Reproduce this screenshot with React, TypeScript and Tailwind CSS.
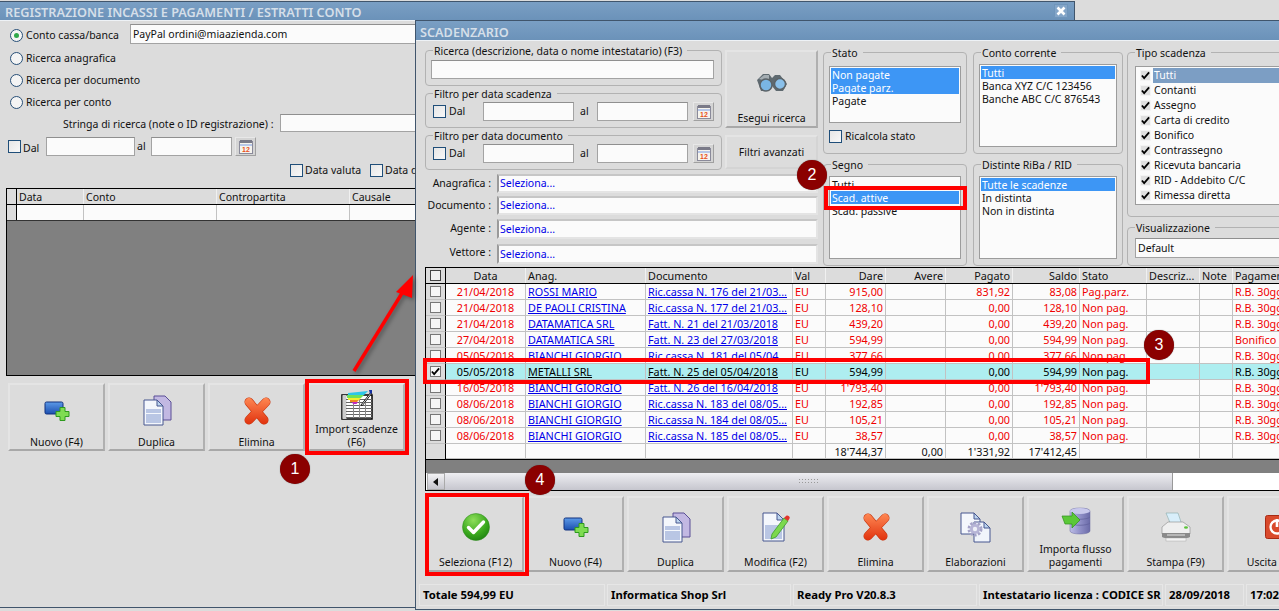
import React from "react";

const IconNew = () => (
  <svg width="26" height="20" viewBox="0 0 26 20">
    <defs><linearGradient id="nb" x1="0" y1="0" x2="0" y2="1"><stop offset="0" stopColor="#5c9ae8" /><stop offset="1" stopColor="#1c4fb0" /></linearGradient></defs>
    <rect x="1" y="1" width="18" height="12" rx="1.500" fill="url(#nb)" stroke="#10317e" />
    <path d="M16 6.500h5v4h4v5h-4v4h-5v-4h-4v-5h4z" fill="#7fdc52" stroke="#2e9a1e" />
  </svg>
);
const IconDup = () => (
  <svg width="30" height="31" viewBox="0 0 30 31">
    <path d="M12 1h11l6 6v18H12z" fill="#c2b8e2" stroke="#5a4f96" />
    <path d="M2 5h13l6 6v19H2z" fill="#f4f7fc" stroke="#46578f" />
    <path d="M15 5v6h6z" fill="#bcd4ee" stroke="#46578f" />
    <rect x="4" y="14" width="15" height="14" fill="#b9c6e4" />
    <rect x="4" y="18" width="15" height="1" fill="#f4f7fc" />
  </svg>
);
const IconDel = () => (
  <svg width="30" height="28" viewBox="0 0 30 28">
    <defs><linearGradient id="xr" gradientUnits="userSpaceOnUse" x1="0" y1="0" x2="0" y2="28"><stop offset="0" stopColor="#ff8a55" /><stop offset="1" stopColor="#e0300c" /></linearGradient></defs>
    <path d="M7 5L22 23M24 5L7 23" fill="none" stroke="#c8360f" strokeWidth="9" strokeLinecap="round" />
    <path d="M7 5L22 23M24 5L7 23" fill="none" stroke="url(#xr)" strokeWidth="7.800" strokeLinecap="round" />
  </svg>
);
const IconImport = () => (
  <svg width="32" height="31" viewBox="0 0 32 31">
    <rect x="1" y="6" width="30" height="24" fill="#fff" stroke="#000" strokeWidth="1.500" />
    <rect x="1.500" y="6" width="4" height="24" fill="#ccc" />
    {[10, 13, 16, 19, 22, 25, 28].map((y) => <rect key={y} x="5" y={y} width="26" height="1" fill="#666" />)}
    {[12, 18, 24].map((x) => <rect key={x} x={x} y="10" width="1" height="19" fill="#888" />)}
    <path d="M7 4L27 2l-4 4H7z" fill="#2cc6e8" />
    <path d="M6 6h17l-3 3H6z" fill="#6fe05a" />
    <path d="M7 9h13l-2 2H7z" fill="#f4ee2a" />
    <path d="M9 11h9l-2 2H9z" fill="#f08a20" />
    <path d="M11 13h6l-1.500 2H12z" fill="#c22ac0" />
    <path d="M20 16L30 3l1 1-10 13z" fill="#fff" stroke="#222" strokeWidth="1" />
    <path d="M28 1l3 0 0 3-2 1z" fill="#1530a0" />
  </svg>
);
const IconOk = () => (
  <svg width="28" height="28" viewBox="0 0 28 28">
    <defs><radialGradient id="gc" cx=".4" cy=".25" r=".85"><stop offset="0" stopColor="#8ede5a" /><stop offset=".6" stopColor="#3aa81e" /><stop offset="1" stopColor="#1a7a10" /></radialGradient></defs>
    <circle cx="14" cy="14" r="13.500" fill="url(#gc)" stroke="#2b8a18" strokeWidth=".5" />
    <path d="M6.500 14.500l5 5 10-10.500" fill="none" stroke="#fff" strokeWidth="3.400" strokeLinejoin="round" strokeLinecap="round" />
  </svg>
);
const IconEdit = () => (
  <svg width="28" height="30" viewBox="0 0 28 30">
    <path d="M1 1h14l7 7v21H1z" fill="#f4f7fc" stroke="#46578f" />
    <path d="M15 1v7h7z" fill="#bcd4ee" stroke="#46578f" />
    <rect x="3" y="13" width="17" height="14" fill="#b9c6e4" />
    <path d="M10 22L22 6l4 3-12 16-5 2z" fill="#7cd84e" stroke="#3c9a2a" strokeWidth=".8" />
    <path d="M22 6l2-2c1-.8 2-.6 3 .3 1 1 1 2 .2 2.700L26 9z" fill="#e2342a" />
  </svg>
);
const IconGearDocs = () => (
  <svg width="31" height="31" viewBox="0 0 31 31">
    <path d="M1 1h13l6 6v15H1z" fill="#f4f7fc" stroke="#46578f" />
    <path d="M14 1v6h6z" fill="#bcd4ee" stroke="#46578f" />
    <path d="M14 10h10l6 6v14H14z" fill="#f0f4fb" stroke="#46578f" />
    <path d="M24 10v6h6z" fill="#bcd4ee" stroke="#46578f" />
    <circle cx="15" cy="17" r="6" fill="none" stroke="#a5a3c8" strokeWidth="3" strokeDasharray="2.400 1.400" />
    <circle cx="15" cy="17" r="5" fill="#b6b4d6" />
    <circle cx="15" cy="17" r="2.200" fill="#eef0f8" />
  </svg>
);
const IconDb = () => (
  <svg width="30" height="28" viewBox="0 0 30 28">
    <defs><linearGradient id="db" x1="0" y1="0" x2="1" y2="0"><stop offset="0" stopColor="#bcbce6" /><stop offset=".5" stopColor="#9090c8" /><stop offset="1" stopColor="#6a6aa8" /></linearGradient></defs>
    <path d="M9 4c0-4 20-4 20 0v20c0 4-20 4-20 0z" fill="url(#db)" stroke="#6a6aa0" strokeWidth=".5" />
    <ellipse cx="19" cy="4" rx="10" ry="3" fill="#c8c8ec" />
    <path d="M9 10c3 3 17 3 20 0M9 16c3 3 17 3 20 0" fill="none" stroke="#5f5f9a" strokeWidth=".7" />
    <path d="M1 9h10V5l8 8-8 8v-4H4z" fill="#5bc838" stroke="#2f8f1c" strokeWidth=".7" />
  </svg>
);
const IconPrint = () => (
  <svg width="30" height="30" viewBox="0 0 30 30">
    <path d="M5 1h12l4 12H10z" fill="#d8eefa" stroke="#8aa" strokeWidth=".6" />
    <path d="M1 15l6-5h15l7 5v7H1z" fill="#efefef" stroke="#888" strokeWidth=".6" />
    <path d="M1 21h28v4c-2 2-26 2-28 0z" fill="#8a8a8a" />
    <rect x="6" y="22.500" width="18" height="1" fill="#e4e4e4" />
    <rect x="5" y="26" width="20" height="3" fill="#f4f4f4" stroke="#999" strokeWidth=".4" />
    <ellipse cx="25" cy="15.500" rx="2" ry="1.200" fill="#5cc23a" />
  </svg>
);
const IconExit = () => (
  <svg width="22" height="24" viewBox="0 0 22 24">
    <rect x="0.500" y="0.500" width="21" height="23" rx="2" fill="#d94a2c" stroke="#a82a14" />
    <circle cx="12" cy="12" r="6.500" fill="none" stroke="#fff" strokeWidth="2.300" />
    <rect x="10.700" y="4" width="2.600" height="8" fill="#fff" />
  </svg>
);
const IconBino = () => (
  <svg width="32" height="20" viewBox="0 0 32 20">
    <path d="M1 8l6-6h6l3 4 3-3h5l7 9-4 7H20l-4-5-3 5H5z" fill="#5f6a70" />
    <path d="M3 7l5-4h5v5H7z" fill="#a4adb2" />
    <circle cx="10" cy="13" r="6" fill="#7ab6e4" stroke="#5b6368" strokeWidth="1.500" />
    <circle cx="24" cy="12" r="5.500" fill="#8ac0ea" stroke="#5b6368" strokeWidth="1.500" />
  </svg>
);
const IconCal = () => (
  <svg width="14" height="14" viewBox="0 0 14 14">
    <rect x="0.500" y="1.500" width="13" height="12" fill="#f6f4ee" stroke="#8a8a9a" />
    <rect x="1" y="0" width="12" height="3" fill="#7a7a88" />
    <rect x="1" y="4" width="12" height="2" fill="#b8c8e8" />
    <text x="7" y="12" textAnchor="middle" fontSize="7" fontWeight="700" fill="#e8501a" fontFamily="Liberation Sans, sans-serif">12</text>
  </svg>
);

const Check = ({ on }: { on?: boolean }) => (
  <span className="shrink-0 w-[13px] h-[13px] border border-[#1f4e79] bg-gradient-to-br from-[#e6e6e6] to-[#f8f8f8] flex items-center justify-center">
    {on && <Tick />}
  </span>
);
const Tick = () => (
  <svg width="10" height="9" viewBox="0 0 10 9"><path d="M1 4.500l2.500 3L9 1" fill="none" stroke="#000" strokeWidth="2" /></svg>
);
const Radio = ({ on }: { on?: boolean }) => (
  <span className="shrink-0 w-[13px] h-[13px] rounded-full border border-[#274f77] bg-[#f4f4f4] flex items-center justify-center">
    {on && <span className="w-[5px] h-[5px] rounded-full bg-[#2fa84a]" />}
  </span>
);
const Field = ({ className = "", children }: { className?: string; children?: React.ReactNode }) => (
  <div className={"bg-[#fbfbfb] border border-[#a3a3a3] border-t-[#8f8f8f] flex items-center px-[2px] overflow-hidden whitespace-nowrap " + className}>{children}</div>
);
const CalBtn = ({ className = "" }: { className?: string }) => (
  <div className={"w-[21px] h-[19px] shrink-0 bg-[#d4d4d4] border border-[#e8e8e8] border-r-[#a0a0a0] border-b-[#a0a0a0] flex items-center justify-center " + className}><IconCal /></div>
);
const Group = ({ title, className = "", children }: { title: string; className?: string; children?: React.ReactNode }) => (
  <div className={"relative border border-[#b2b2b2] rounded-[4px] " + className}>
    <span className="absolute -top-[7px] left-[7px] bg-[#dcdcdc] px-[1px] pr-[5px] leading-[14px] whitespace-nowrap">{title}</span>
    {children}
  </div>
);
const Btn = ({ label, icon, className = "pb-[1px]" }: { label: React.ReactNode; icon: React.ReactNode; className?: string }) => (
  <div className={"shrink-0 w-[97px] bg-[#dcdcdc] border-2 border-t-[#e4e4e4] border-l-[#e4e4e4] border-r-[#b0b0b0] border-b-[#a8a8a8] flex flex-col items-center text-center " + className}>
    <div className="flex-1 flex items-center justify-center">{icon}</div>
    <div className="leading-[13px]">{label}</div>
  </div>
);
const ListItem = ({ on, children }: { on?: boolean; children: React.ReactNode }) => (
  <div className={"h-[13px] leading-[15px] px-[1px] whitespace-nowrap " + (on ? "bg-[#3d96f5] text-white" : "")}>{children}</div>
);
const List = ({ className = "", children }: { className?: string; children: React.ReactNode }) => (
  <div className={"bg-[#fbfbfb] border border-[#9c9c9c] p-[1px] overflow-hidden " + className}>{children}</div>
);
const SelectRow = ({ label, className, labelClass, h }: { label: string; className: string; labelClass: string; h: string }) => (
  <div className={"flex items-center " + className}>
    <span className={"w-[67px] text-right pr-[1px] whitespace-nowrap " + labelClass}>{label}</span>
    <div className={"ml-[5px] w-[321px] bg-[#fbfbfb] border-2 border-l-[#9a9a9a] border-t-[#c6c6c6] border-r-[#e4e4e4] border-b-[#e4e4e4] text-[#0000e8] pl-[1px] pt-[1px] flex items-center " + h}>Seleziona...</div>
  </div>
);

type R = { d: string; a: string; doc: string; dare: string; pag: string; sal: string; st: string; pm: string; sel?: boolean };
const rows: R[] = [
  { d: "21/04/2018", a: "ROSSI MARIO", doc: "Ric.cassa N. 176 del 21/03...", dare: "915,00", pag: "831,92", sal: "83,08", st: "Pag.parz.", pm: "R.B. 30gg d.f." },
  { d: "21/04/2018", a: "DE PAOLI CRISTINA", doc: "Ric.cassa N. 177 del 21/03...", dare: "128,10", pag: "0,00", sal: "128,10", st: "Non pag.", pm: "R.B. 30gg d.f." },
  { d: "21/04/2018", a: "DATAMATICA SRL", doc: "Fatt. N. 21 del 21/03/2018", dare: "439,20", pag: "0,00", sal: "439,20", st: "Non pag.", pm: "R.B. 30gg d.f." },
  { d: "27/04/2018", a: "DATAMATICA SRL", doc: "Fatt. N. 23 del 27/03/2018", dare: "594,99", pag: "0,00", sal: "594,99", st: "Non pag.", pm: "Bonifico bancario" },
  { d: "05/05/2018", a: "BIANCHI GIORGIO", doc: "Ric.cassa N. 181 del 05/04...", dare: "377,66", pag: "0,00", sal: "377,66", st: "Non pag.", pm: "R.B. 30gg d.f." },
  { d: "05/05/2018", a: "METALLI SRL", doc: "Fatt. N. 25 del 05/04/2018", dare: "594,99", pag: "0,00", sal: "594,99", st: "Non pag.", pm: "R.B. 30gg d.f.", sel: true },
  { d: "16/05/2018", a: "BIANCHI GIORGIO", doc: "Fatt. N. 26 del 16/04/2018", dare: "1'793,40", pag: "0,00", sal: "1'793,40", st: "Non pag.", pm: "R.B. 30gg d.f." },
  { d: "08/06/2018", a: "BIANCHI GIORGIO", doc: "Ric.cassa N. 183 del 08/05...", dare: "192,85", pag: "0,00", sal: "192,85", st: "Non pag.", pm: "R.B. 30gg d.f." },
  { d: "08/06/2018", a: "BIANCHI GIORGIO", doc: "Ric.cassa N. 184 del 08/05...", dare: "105,21", pag: "0,00", sal: "105,21", st: "Non pag.", pm: "R.B. 30gg d.f." },
  { d: "08/06/2018", a: "BIANCHI GIORGIO", doc: "Ric.cassa N. 185 del 08/05...", dare: "38,57", pag: "0,00", sal: "38,57", st: "Non pag.", pm: "R.B. 30gg d.f." },
];
const gridCols = "grid grid-cols-[20px_80px_120px_147px_33px_60px_60px_67px_67px_67px_53px_33px_80px]";
const Cell = ({ className = "", children }: { className?: string; children?: React.ReactNode }) => (
  <div className={"border-r border-b border-[#c2c2c2] px-[2px] pt-[2px] flex items-center overflow-hidden whitespace-nowrap " + className}>{children}</div>
);

const Row = ({ r }: { r: R }) => {
  const color = r.sel ? "text-black" : "text-[#f00000]";
  const bg = r.sel ? "bg-[#aeeef0]" : "bg-[#fbfbfb]";
  const link = (r.sel ? "text-black" : "text-[#0000e8]") + " underline";
  return (
    <div className={gridCols + " h-[16px] " + bg}>
      <div className="bg-[#dcdcdc] border-r border-r-black border-b border-b-[#c2c2c2] flex items-center justify-center">
        <span className="w-[11px] h-[11px] border border-[#777] bg-[#f6f6f6] flex items-center justify-center">{r.sel && <Tick />}</span>
      </div>
      <Cell className={"justify-center " + color}>{r.d}</Cell>
      <Cell className={link}>{r.a}</Cell>
      <Cell className={link}>{r.doc}</Cell>
      <Cell className={color}>EU</Cell>
      <Cell className={"justify-end " + color}>{r.dare}</Cell>
      <Cell />
      <Cell className={"justify-end " + color}>{r.pag}</Cell>
      <Cell className={"justify-end " + color}>{r.sal}</Cell>
      <Cell className={color}>{r.st}</Cell>
      <Cell />
      <Cell />
      <Cell className={color}>{r.pm}</Cell>
    </div>
  );
};

const Head = ({ className = "", children }: { className?: string; children?: React.ReactNode }) => (
  <div className={"border-r border-[#f0f0f0] px-[2px] pt-[2px] flex items-center overflow-hidden whitespace-nowrap " + className}>{children}</div>
);

const Badge = ({ n, className }: { n: string; className: string }) => (
  <div className={"absolute w-[30px] h-[30px] rounded-full bg-[#8b0000] text-white flex items-center justify-center text-[16px] font-['Liberation_Sans',sans-serif] shadow-[0_0_1px_#555] " + className}>{n}</div>
);

export default function App() {
  return (
    <div className="relative w-[1279px] h-[611px] overflow-hidden bg-[#dcdcdc] text-[#111] text-[10.5px] font-['Noto_Sans',sans-serif]">
      {/* back window */}
      <div className="absolute left-0 top-[1px] w-[1075px] h-[607px] border-t border-r border-b border-[#40556c] bg-[#dcdcdc] flex flex-col">
        <div className="h-[19px] shrink-0 bg-gradient-to-b from-[#7a9fc4] to-[#6b92b9] flex items-center justify-between pl-[5px] pr-[5px] border-b border-[#eef2f6]">
          <span className="text-[12.7px] pt-[4px] font-semibold text-[#d5dfe9] whitespace-nowrap">REGISTRAZIONE INCASSI E PAGAMENTI / ESTRATTI CONTO</span>
          <span className="w-[14px] h-[14px] bg-[#83a5c8] border border-[#6f95bb] flex items-center justify-center mr-[1px]">
            <svg width="10" height="10" viewBox="0 0 10 10"><path d="M1.500 1.500l7 7M8.500 1.500l-7 7" stroke="#fff" strokeWidth="2.600" /></svg>
          </span>
        </div>
        <div className="pt-[3px] flex flex-col">
          <div className="flex items-center h-[20px] pl-[10px]">
            <span className="flex items-center gap-[3px] w-[120px] pt-[3px]"><Radio on /><span className="pt-[1px]">Conto cassa/banca</span></span>
            <Field className="w-[320px] h-[20px] pt-[1px]">PayPal ordini@miaazienda.com</Field>
          </div>
          <div className="flex items-center h-[23px] mt-[2px] pl-[10px] pt-[1px] gap-[3px]"><Radio /><span className="pt-[1px]">Ricerca anagrafica</span></div>
          <div className="flex items-center h-[22px] pl-[10px] pt-[1px] gap-[3px]"><Radio /><span className="pt-[1px]">Ricerca per documento</span></div>
          <div className="flex items-center h-[22px] pl-[10px] pt-[1px] gap-[3px]"><Radio /><span className="pt-[1px]">Ricerca per conto</span></div>
          <div className="flex items-center h-[18px] mt-[1px] pl-[63px]">
            <span className="w-[217px] pt-[3px] whitespace-nowrap">Stringa di ricerca (note o ID registrazione) :</span>
            <Field className="w-[200px] h-[18px]" />
          </div>
          <div className="flex items-center h-[19px] mt-[5px] pl-[8px]">
            <Check />
            <span className="ml-[2px] w-[23px] pt-[4px]">Dal</span>
            <Field className="w-[89px] h-[19px]" />
            <span className="w-[16px] pl-[2px] pt-[1px]">al</span>
            <Field className="w-[81px] h-[19px]" />
            <CalBtn className="ml-[3px]" />
          </div>
          <div className="flex items-center h-[14px] mt-[7px] pl-[290px]">
            <Check />
            <span className="ml-[2px] w-[65px] pt-[2px] whitespace-nowrap">Data valuta</span>
            <Check />
            <span className="ml-[2px] pt-[2px] whitespace-nowrap">Data documento</span>
          </div>
          <div className="mt-[11px] ml-[6px] h-[188px] border border-black border-r-0 bg-[#808080] flex flex-col">
            <div className="grid grid-cols-[10px_67px_133px_133px_133px] h-[16px] bg-[#dcdcdc] border-b border-black">
              <div className="border-r border-black" />
              <Head>Data</Head><Head>Conto</Head><Head>Contropartita</Head><Head>Causale</Head>
            </div>
            <div className="grid grid-cols-[10px_67px_133px_133px_133px] h-[16px] bg-[#fbfbfb] border-b border-[#333]">
              <div className="border-r border-black bg-[#dcdcdc]" />
              <div className="border-r border-[#c2c2c2]" /><div className="border-r border-[#c2c2c2]" /><div className="border-r border-[#c2c2c2]" /><div />
            </div>
          </div>
          <div className="flex gap-[3px] pl-[8px] mt-[7px] h-[68px]">
            <Btn className="pb-0" label="Nuovo (F4)" icon={<IconNew />} />
            <Btn className="pb-0" label="Duplica" icon={<IconDup />} />
            <Btn className="pb-0" label="Elimina" icon={<IconDel />} />
            <Btn className="pb-0" label={<>Import scadenze<br />(F6)</>} icon={<IconImport />} />
          </div>
        </div>
      </div>

      {/* front window */}
      <div className="absolute left-[415px] top-[20px] w-[880px] h-[590px] border border-[#40556c] bg-[#dcdcdc] flex flex-col">
        <div className="h-[20px] shrink-0 bg-gradient-to-b from-[#7a9fc4] to-[#6b92b9] flex items-center pl-[4px] border-b border-[#eef2f6]">
          <span className="text-[12.7px] pt-[4px] font-semibold text-[#d5dfe9]">SCADENZARIO</span>
        </div>
        <div className="h-[226px] shrink-0 flex pl-[9px] pt-[9px]">
          <div className="w-[393px] shrink-0 flex flex-col">
            <div className="flex gap-[3px]">
              <div className="w-[297px] flex flex-col">
                <Group title="Ricerca (descrizione, data o nome intestatario) (F3)" className="h-[36px] pl-[5px] pr-[7px] pt-[9px]">
                  <Field className="w-full h-[19px]" />
                </Group>
                <Group title="Filtro per data scadenza" className="h-[35px] mt-[7px] flex items-center pl-[7px] pt-[2px]">
                  <Check /><span className="ml-[3px] w-[34px] pt-[1px]">Dal</span>
                  <Field className="w-[91px] h-[19px]" /><span className="w-[23px] pl-[6px] pt-[1px]">al</span>
                  <Field className="w-[91px] h-[19px]" /><CalBtn className="ml-[5px]" />
                </Group>
                <Group title="Filtro per data documento" className="h-[35px] mt-[7px] flex items-center pl-[7px] pt-[2px]">
                  <Check /><span className="ml-[3px] w-[34px] pt-[1px]">Dal</span>
                  <Field className="w-[91px] h-[19px]" /><span className="w-[23px] pl-[6px] pt-[1px]">al</span>
                  <Field className="w-[91px] h-[19px]" /><CalBtn className="ml-[5px]" />
                </Group>
              </div>
              <div className="flex flex-col">
                <div className="w-[93px] h-[78px] border-2 border-t-[#e4e4e4] border-l-[#e4e4e4] border-r-[#b0b0b0] border-b-[#a8a8a8] flex flex-col items-center">
                  <div className="flex-1 flex items-center justify-center"><IconBino /></div>
                  <div className="leading-[15px] h-[15px]">Esegui ricerca</div>
                </div>
                <div className="w-[93px] h-[34px] mt-[7px] pt-[1px] border-2 border-t-[#e4e4e4] border-l-[#e4e4e4] border-r-[#d4d4d4] border-b-[#d4d4d4] flex items-center justify-center">Filtri avanzati</div>
              </div>
            </div>
            <SelectRow label="Anagrafica :" className="mt-[4px]" labelClass="pt-[1px]" h="h-[19px]" />
            <SelectRow label="Documento :" className="mt-[3px]" labelClass="pt-[1px]" h="h-[19px]" />
            <SelectRow label="Agente :" className="mt-[4px]" labelClass="pb-[1px]" h="h-[20px]" />
            <SelectRow label="Vettore :" className="mt-[5px]" labelClass="pb-[3px]" h="h-[20px]" />
          </div>
          <div className="w-[144px] ml-[5px] mt-[2px] shrink-0 flex flex-col gap-[10px]">
            <Group title="Stato" className="h-[102px] px-[5px] pt-[13px]">
              <List className="h-[57px]">
                <ListItem on>Non pagate</ListItem>
                <ListItem on>Pagate parz.</ListItem>
                <ListItem>Pagate</ListItem>
              </List>
              <div className="flex items-center gap-[3px] mt-[6px]"><Check /><span>Ricalcola stato</span></div>
            </Group>
            <Group title="Segno" className="h-[102px] px-[5px] pt-[11px]">
              <List className="h-[83px]">
                <ListItem>Tutti</ListItem>
                <ListItem on>Scad. attive</ListItem>
                <ListItem>Scad. passive</ListItem>
              </List>
            </Group>
          </div>
          <div className="w-[150px] ml-[6px] mt-[2px] shrink-0 flex flex-col gap-[10px]">
            <Group title="Conto corrente" className="h-[102px] px-[5px] pt-[11px]">
              <List className="h-[83px]">
                <ListItem on>Tutti</ListItem>
                <ListItem>Banca XYZ C/C 123456</ListItem>
                <ListItem>Banche ABC C/C 876543</ListItem>
              </List>
            </Group>
            <Group title="Distinte RiBa / RID" className="h-[102px] px-[5px] pt-[11px]">
              <List className="h-[83px]">
                <ListItem on>Tutte le scadenze</ListItem>
                <ListItem>In distinta</ListItem>
                <ListItem>Non in distinta</ListItem>
              </List>
            </Group>
          </div>
          <div className="w-[170px] ml-[4px] mt-[2px] shrink-0 flex flex-col gap-[10px]">
            <Group title="Tipo scadenza" className="h-[165px] pl-[7px] pt-[13px]">
              <div className="h-[139px] bg-[#fbfbfb] border border-[#9c9c9c] pl-[4px] pt-[1px]">
                {["Tutti", "Contanti", "Assegno", "Carta di credito", "Bonifico", "Contrassegno", "Ricevuta bancaria", "RID - Addebito C/C", "Rimessa diretta"].map((t, i) => (
                  <div key={t} className="flex items-center h-[15px] gap-[2px]">
                    <span className="w-[11px] h-[11px] bg-[#e0e0e0] border border-[#f4f4f4] flex items-center justify-center shrink-0"><Tick /></span>
                    <span className={"flex-1 pl-[1px] whitespace-nowrap " + (i === 0 ? "bg-[#7c9ec4] text-white" : "")}>{t}</span>
                  </div>
                ))}
              </div>
            </Group>
            <Group title="Visualizzazione" className="h-[39px] pl-[7px] pt-[10px]">
              <Field className="h-[20px] pt-[1px]">Default</Field>
            </Group>
          </div>
        </div>

        <div className="ml-[9px] h-[224px] shrink-0 border-t border-b border-l border-black bg-[#808080] flex flex-col text-[10.8px]">
          <div className={gridCols + " h-[16px] shrink-0 bg-[#dcdcdc] border-b border-black"}>
            <div className="border-r border-black flex items-center justify-center"><span className="w-[11px] h-[11px] border border-[#444] bg-[#f0f0f0]" /></div>
            <Head className="justify-center">Data</Head>
            <Head>Anag.</Head>
            <Head>Documento</Head>
            <Head>Val</Head>
            <Head className="justify-end">Dare</Head>
            <Head className="justify-end">Avere</Head>
            <Head className="justify-end">Pagato</Head>
            <Head className="justify-end">Saldo</Head>
            <Head>Stato</Head>
            <Head>Descriz...</Head>
            <Head>Note</Head>
            <Head>Pagamento</Head>
          </div>
          {rows.map((r, i) => <Row key={i} r={r} />)}
          <div className={gridCols + " h-[16px] shrink-0 bg-[#fbfbfb] border-b border-black"}>
            <div className="bg-[#dcdcdc] border-r border-black" />
            <Cell /><Cell /><Cell /><Cell />
            <Cell className="justify-end">18'744,37</Cell>
            <Cell className="justify-end">0,00</Cell>
            <Cell className="justify-end">1'331,92</Cell>
            <Cell className="justify-end">17'412,45</Cell>
            <Cell /><Cell /><Cell /><Cell />
          </div>
          <div className="h-[13px] shrink-0" />
          <div className="h-[17px] shrink-0 flex bg-white">
            <div className="w-[18px] ml-[1px] bg-gradient-to-b from-[#f2f2f4] to-[#c4c4cc] border border-[#aaa] flex items-center justify-center">
              <svg width="6" height="8" viewBox="0 0 6 8"><path d="M5 0v8L0 4z" fill="#111" /></svg>
            </div>
            <div className="w-[728px] bg-gradient-to-b from-[#eeeef2] to-[#c6c6ce] border-r border-[#999] flex items-center justify-center">
              <span className="w-[22px] h-[7px] bg-[radial-gradient(#9a9a9a_1px,transparent_1px)] bg-[length:3px_3px]" />
            </div>
          </div>
        </div>

        <div className="flex gap-[3px] pl-[11px] mt-[5px] h-[76px] shrink-0">
          <Btn label="Seleziona (F12)" icon={<IconOk />} />
          <Btn label="Nuovo (F4)" icon={<IconNew />} />
          <Btn label="Duplica" icon={<IconDup />} />
          <Btn label="Modifica (F2)" icon={<IconEdit />} />
          <Btn label="Elimina" icon={<IconDel />} />
          <Btn label="Elaborazioni" icon={<IconGearDocs />} />
          <Btn label={<>Importa flusso<br />pagamenti</>} icon={<IconDb />} />
          <Btn label="Stampa (F9)" icon={<IconPrint />} />
          <Btn label="Uscita (ESC)" icon={<IconExit />} />
        </div>
        <div className="flex gap-[2px] pl-[3px] mt-[12px] h-[22px] shrink-0 font-bold text-[11.3px] text-black">
          {[["Totale 594,99 EU", "w-[186px]"], ["Informatica Shop Srl", "w-[184px]"], ["Ready Pro V20.8.3", "w-[184px]"], ["Intestatario licenza : CODICE SR", "w-[184px]"], ["28/09/2018", "w-[79px]"], ["17:02", "w-[60px]"]].map(([t, w]) => (
            <div key={t} className={w + " shrink-0 border border-[#e6e6e6] pl-[3px] pt-[1px] flex items-center whitespace-nowrap overflow-hidden"}>{t}</div>
          ))}
        </div>
      </div>

      {/* annotations */}
      <div className="absolute left-[305px] top-[379px] w-[104px] h-[76px] border-4 border-[#ff0000]" />
      <div className="absolute left-[824px] top-[186px] w-[143px] h-[24px] border-4 border-[#ff0000]" />
      <div className="absolute left-[423px] top-[358px] w-[727px] h-[26px] border-4 border-[#ff0000]" />
      <div className="absolute left-[425px] top-[493px] w-[104px] h-[83px] border-4 border-[#ff0000]" />
      <svg className="absolute left-[340px] top-[265px] drop-shadow-[2px_2px_2px_rgba(0,0,0,0.35)]" width="85" height="115" viewBox="340 265 85 115">
        <path d="M354 371L404 290" stroke="#f00" strokeWidth="3.500" />
        <path d="M413 275L396 292L412 298z" fill="#f00" />
      </svg>
      <Badge n="1" className="left-[280px] top-[454px]" />
      <Badge n="2" className="left-[797px] top-[160px]" />
      <Badge n="3" className="left-[1144px] top-[330px]" />
      <Badge n="4" className="left-[525px] top-[465px]" />
    </div>
  );
}
